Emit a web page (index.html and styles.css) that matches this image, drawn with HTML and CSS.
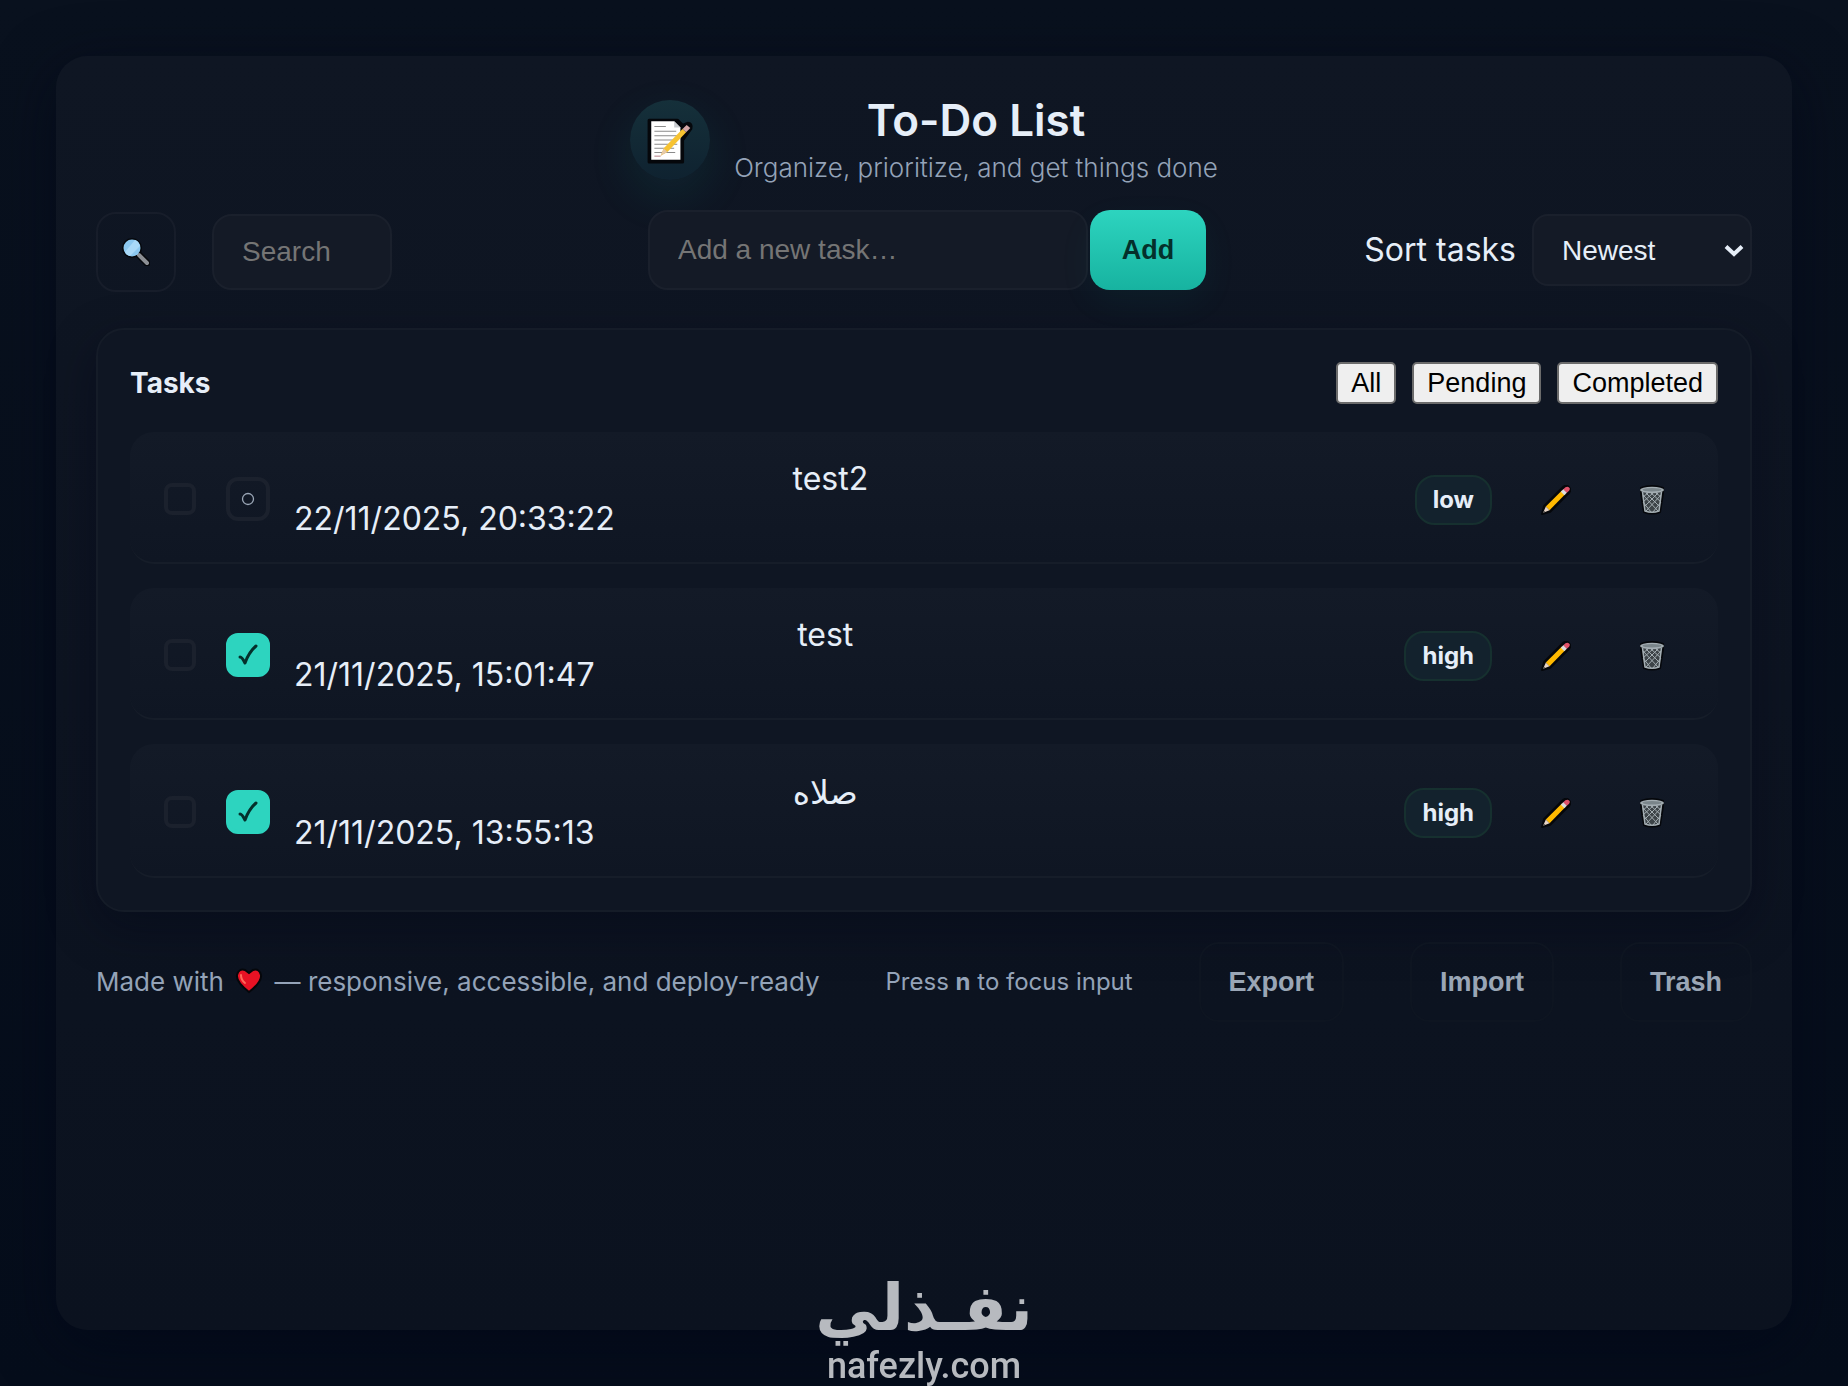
FILE: index.html
```html
<!DOCTYPE html>
<html lang="en">
<head>
<meta charset="utf-8">
<title>To-Do List</title>
<meta name="viewport" content="width=device-width, initial-scale=1">
<link rel="stylesheet" href="styles.css">
</head>
<body>
<svg class="sprite" aria-hidden="true">
  <symbol id="pencil" viewBox="0 0 28 28">
    <path d="M1 27 3 19.500 19.500 3Q23 -1 26 2T25 8.500L8.500 25Z" fill="#05070b" stroke="#05070b" stroke-width="2" stroke-linejoin="round"/>
    <path d="M4.500 20 19.500 5.200 22.800 8.500 8 23.500Z" fill="#ffb900"/>
    <path d="M4.500 20 8 23.500 2 26Z" fill="#e6d3c4"/>
    <path d="M2.800 24 4 25.200 2 26Z" fill="#444"/>
    <path d="M18.500 6.200 21 3.700 24.300 7 21.800 9.500Z" fill="#dcdcdc"/>
    <path d="M20.800 3.900Q24 .6 26.200 2.300T24.100 7.200Z" fill="#e0526a"/>
  </symbol>
  <symbol id="bin" viewBox="0 0 28 30">
    <path d="M3 3Q14 -1 25 3V8L22 27Q14 30 6 27L3 8Z" fill="#05070b" stroke="#05070b" stroke-width="2" stroke-linejoin="round"/>
    <path d="M4 6H24L21.500 26Q14 29 6.500 26Z" fill="#3d4448"/>
    <path d="M5 10 20 26M8 8 22 22M13 8 23 17M18 8 23 12M5 17 13 27M23 10 8 26M20 8 6 22M15 8 5 17M10 8 5 12M23 17 15 27" stroke="#a3adb2" stroke-width="1" fill="none"/>
    <path d="M4.500 7 7 26Q14 28.500 21 26L23.500 7" fill="none" stroke="#a3adb2" stroke-width="1.500"/>
    <ellipse cx="14" cy="5" rx="12" ry="3.300" fill="#a3adb2"/>
    <ellipse cx="14" cy="4.800" rx="9.500" ry="1.700" fill="#7a858a"/>
  </symbol>
</svg>

<main class="app">
  <header class="hero">
    <div class="logo">
      <svg width="50" height="50" viewBox="0 0 48 48" role="img" aria-label="Memo">
        <path d="M4 5H31L36 10 41 8Q45 8 44 13L36 24V45H4Z" fill="#05070b" stroke="#05070b" stroke-width="3" stroke-linejoin="round"/>
        <path d="M6 6H28L34 12V43H6Z" fill="#fff"/>
        <path d="M28 6V12H34Z" fill="#c9ccd0"/>
        <path d="M9 11H20M9 15.500H30M9 20H31M9 24H31M9 28H31M9 32H28M9 36H29" stroke="#8b8b8b" stroke-width="1"/>
        <path d="M9 39.500H15" stroke="#b9848c" stroke-width="1"/>
        <path d="M15 39 18 32 36 13.500 39.500 16.500 21.500 35.500Z" fill="#f7c331"/>
        <path d="M15 39 18 32 21.500 35.500Z" fill="#e6c9a8"/>
        <path d="M36 13.500 40 9.500 43.500 12.500 39.500 16.500Z" fill="#d3a6a6"/>
      </svg>
    </div>
    <div class="headline">
      <h1>To-Do List</h1>
      <p>Organize, prioritize, and get things done</p>
    </div>
  </header>

  <div class="toolbar">
    <div class="finder">
      <button class="icon-button" type="button" aria-label="Search tasks">
        <svg width="28" height="28" viewBox="0 0 28 28" aria-hidden="true">
          <path d="M16 16 25 25" stroke="#05070b" stroke-width="7" stroke-linecap="round"/>
          <circle cx="10" cy="10" r="10" fill="#05070b"/>
          <path d="M17 17 25 25" stroke="#8c8f94" stroke-width="4" stroke-linecap="round"/>
          <circle cx="10" cy="10" r="8.500" fill="#8cc8f0"/>
          <path d="M3 14 13 2Q17 3 18 8L8 18Q4 17 3 14Z" fill="#a9d9f8"/>
        </svg>
      </button>
      <input class="field search" type="search" placeholder="Search" aria-label="Search">
    </div>
    <form class="composer">
      <input class="field task-input" type="text" placeholder="Add a new task…" aria-label="New task">
      <button class="add" type="button">Add</button>
    </form>
    <div class="sorter">
      <label for="sort">Sort tasks</label>
      <span class="select-box">
        <select class="field sort" id="sort"><option>Newest</option><option>Oldest</option></select>
        <svg class="chevron" width="20" height="14" viewBox="0 0 20 14" aria-hidden="true"><path d="M2 2.500 10 10 18 2.500" fill="none" stroke="#e6eef8" stroke-width="4"/></svg>
      </span>
    </div>
  </div>

  <section class="panel">
    <div class="panel-head">
      <h2>Tasks</h2>
      <div class="filters">
        <button type="button">All</button>
        <button type="button">Pending</button>
        <button type="button">Completed</button>
      </div>
    </div>
    <ul class="tasks">
      <li class="task">
        <input class="pick" type="checkbox" aria-label="Select test2">
        <button class="toggle" type="button" aria-label="Mark test2 done"><svg width="14" height="14" viewBox="0 0 14 14"><circle cx="7" cy="7" r="5.500" fill="none" stroke="#9aa6b6" stroke-width="1.300"/></svg></button>
        <div class="body"><div class="title">test2</div><time>22/11/2025, 20:33:22</time></div>
        <span class="badge">low</span>
        <button class="action" type="button" aria-label="Edit"><svg width="30" height="30"><use href="#pencil"/></svg></button>
        <button class="action" type="button" aria-label="Delete"><svg width="28" height="30"><use href="#bin"/></svg></button>
      </li>
      <li class="task">
        <input class="pick" type="checkbox" aria-label="Select test">
        <button class="toggle done" type="button" aria-label="Mark test pending"><svg width="22" height="24" viewBox="0 0 22 24"><path d="M3 14Q5 14 8 20Q12 9 19 3" fill="none" stroke="#04302b" stroke-width="3" stroke-linecap="round" stroke-linejoin="round"/></svg></button>
        <div class="body"><div class="title">test</div><time>21/11/2025, 15:01:47</time></div>
        <span class="badge">high</span>
        <button class="action" type="button" aria-label="Edit"><svg width="30" height="30"><use href="#pencil"/></svg></button>
        <button class="action" type="button" aria-label="Delete"><svg width="28" height="30"><use href="#bin"/></svg></button>
      </li>
      <li class="task">
        <input class="pick" type="checkbox" aria-label="Select صلاه">
        <button class="toggle done" type="button" aria-label="Mark صلاه pending"><svg width="22" height="24" viewBox="0 0 22 24"><path d="M3 14Q5 14 8 20Q12 9 19 3" fill="none" stroke="#04302b" stroke-width="3" stroke-linecap="round" stroke-linejoin="round"/></svg></button>
        <div class="body"><div class="title arabic" lang="ar">صلاه</div><time>21/11/2025, 13:55:13</time></div>
        <span class="badge">high</span>
        <button class="action" type="button" aria-label="Edit"><svg width="30" height="30"><use href="#pencil"/></svg></button>
        <button class="action" type="button" aria-label="Delete"><svg width="28" height="30"><use href="#bin"/></svg></button>
      </li>
    </ul>
  </section>

  <footer class="foot">
    <p class="credit">Made with <svg class="heart" width="30" height="28" viewBox="0 0 30 28" role="img" aria-label="love"><path d="M15 25Q2 15 3 8Q5 1 11 3L15 6 19 3Q25 1 27 8Q28 15 15 25Z" fill="#e81224" stroke="#05070b" stroke-width="2"/><path d="M7 8Q7 13 11 16" fill="none" stroke="#ff6a5a" stroke-width="2" stroke-linecap="round"/></svg> — responsive, accessible, and deploy-ready</p>
    <p class="hint">Press <strong>n</strong> to focus input</p>
    <button class="ghost" type="button">Export</button>
    <button class="ghost" type="button">Import</button>
    <button class="ghost" type="button">Trash</button>
  </footer>
</main>

<div class="watermark">
  <span class="mark-ar" lang="ar" dir="rtl">نفـذلي</span>
  <span class="mark-en">nafezly.com</span>
</div>
</body>
</html>
```
FILE: styles.css
```css
* { box-sizing: border-box; }

body {
  margin: 0;
  min-height: 100vh;
  padding: 56px;
  display: flex;
  background: linear-gradient(180deg, #09111e, #050d1b);
  color: #e6eef8;
  font-family: Inter, "DejaVu Sans", sans-serif;
  font-size: 32px;
  line-height: 40px;
}

h1, h2, p, ul { margin: 0; padding: 0; }
button, input, select { font-family: "Liberation Sans", Arial, sans-serif; font-size: 27px; }
svg { display: block; }
.sprite { position: absolute; width: 0; height: 0; }

.app {
  flex: 1;
  padding: 40px;
  border-radius: 32px;
  background: linear-gradient(180deg, #0f1623, #0b121f);
  box-shadow: 0 16px 60px rgba(2, 6, 23, 0.6);
}

.hero { display: flex; justify-content: center; align-items: center; gap: 24px; }
.logo {
  display: grid;
  place-items: center;
  width: 80px;
  height: 80px;
  margin-bottom: 8px;
  border-radius: 50%;
  background: linear-gradient(180deg, #15303a, #0f2230);
  box-shadow: 0 16px 48px rgba(20, 184, 166, 0.1);
}
.headline { text-align: center; }
h1 { font-size: 44px; line-height: 48px; font-weight: 600; }
.headline p { font-size: 26px; line-height: 48px; font-weight: 300; color: #94a3b8; }

.toolbar {
  display: grid;
  grid-template-columns: 1fr auto 1fr;
  align-items: center;
  margin-top: 16px;
}
.finder { display: flex; align-items: center; gap: 36px; padding-top: 4px; }
.icon-button {
  display: grid;
  place-items: center;
  width: 80px;
  height: 80px;
  border: 2px solid #171d2a;
  border-radius: 20px;
  background: transparent;
}
.field {
  padding: 0 28px;
  border: 2px solid #1a202c;
  border-radius: 20px;
  background: #141a26;
  color: #e6eef8;
  font-size: 28px;
}
.field::placeholder { color: #757575; }
.search { width: 180px; height: 76px; }
.composer { display: flex; gap: 2px; padding-left: 6px; }
.task-input { width: 440px; height: 80px; }
.add {
  width: 116px;
  height: 80px;
  border: 0;
  border-radius: 20px;
  background: linear-gradient(180deg, #2dd4bf, #17b3a0);
  box-shadow: 0 12px 36px rgba(20, 184, 166, 0.06);
  color: #04302b;
  font-weight: 700;
}
.sorter { display: flex; align-items: center; justify-content: flex-end; gap: 16px; }
.select-box { position: relative; }
.sort { display: block; width: 220px; height: 72px; border-radius: 16px; appearance: none; }
.chevron { position: absolute; right: 8px; top: 30px; pointer-events: none; }

.panel {
  margin-top: 36px;
  padding: 32px;
  border: 2px solid #151c28;
  border-radius: 28px;
  background: #0f1623;
  box-shadow: 0 16px 48px rgba(2, 6, 23, 0.4);
}
.panel-head { display: flex; justify-content: space-between; align-items: center; margin-bottom: 28px; }
h2 { font-size: 28px; font-weight: 700; }
.filters { display: flex; gap: 16px; }
.filters button {
  height: 42px;
  padding: 0 13px;
  border: 2px solid #6b6b6b;
  border-radius: 5px;
  background: #efefef;
  color: #000;
}

.tasks { display: flex; flex-direction: column; gap: 24px; list-style: none; }
.task {
  display: flex;
  align-items: center;
  min-height: 132px;
  padding: 27px 34px 23px 32px;
  border-bottom: 2px solid #161d29;
  border-radius: 24px;
  background: linear-gradient(180deg, #131a27, #0f1623);
}
.pick {
  appearance: none;
  width: 32px;
  height: 32px;
  margin: 0 30px 0 2px;
  border: 4px solid #1b212d;
  border-radius: 8px;
}
.toggle {
  display: grid;
  place-items: center;
  width: 44px;
  height: 44px;
  padding: 0;
  border: 4px solid #1b212d;
  border-radius: 12px;
  background: transparent;
}
.done { border-color: #2dd4bf; background: #2dd4bf; }
.body { flex: 1; margin: 0 48px 0 24px; }
.title { text-align: center; }
.arabic { font-size: 33px; line-height: 42px; }
time { display: block; }
.badge {
  margin-top: 2px;
  padding: 7px 16px;
  border: 2px solid #16302f;
  border-radius: 20px;
  background: #13222d;
  font-size: 24px;
  line-height: 32px;
  font-weight: 700;
}
.action {
  display: grid;
  place-items: center;
  width: 64px;
  height: 64px;
  margin: 2px 0 0 32px;
  padding: 0;
  border: 0;
  background: transparent;
}

.foot {
  display: flex;
  justify-content: space-between;
  align-items: center;
  margin-top: 30px;
  color: #94a3b8;
}
.credit { font-size: 26px; }
.heart { display: inline-block; margin: 0 3px; vertical-align: -4px; }
.hint { font-size: 24px; }
.ghost {
  height: 80px;
  padding: 0 28px;
  border: 2px solid #0e1521;
  border-radius: 20px;
  background: transparent;
  color: #9aa6b6;
  font-weight: 700;
}

.watermark {
  position: fixed;
  left: 0;
  right: 0;
  bottom: 0;
  display: flex;
  flex-direction: column;
  align-items: center;
  color: #b7babf;
  pointer-events: none;
}
.mark-ar { font-family: "DejaVu Sans", sans-serif; font-weight: 700; font-size: 64px; line-height: 76px; }
.mark-en { font-family: Roboto, sans-serif; font-weight: 500; font-size: 36px; line-height: 40px; }
```
